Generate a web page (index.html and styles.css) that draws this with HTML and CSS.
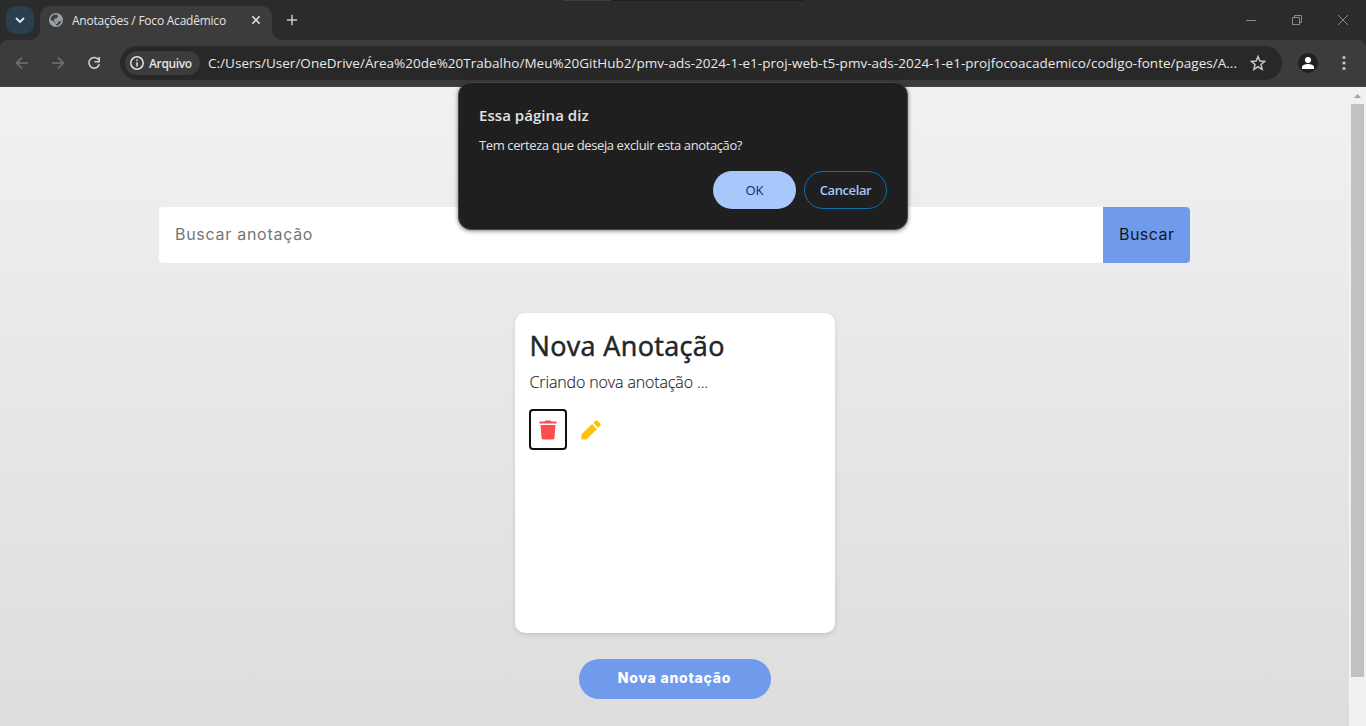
FILE: index.html
```html
<!DOCTYPE html>
<html lang="pt-BR">
<head>
<meta charset="utf-8">
<title>Anotações / Foco Acadêmico</title>
<link rel="stylesheet" href="styles.css">
</head>
<body>
<header class="browser">
  <div class="tabstrip">
    <div class="tabsearch"><svg width="28" height="28" viewBox="0 0 28 28"><path d="M10 12l4 4 4-4" fill="none" stroke="#e8eaed" stroke-width="1.8"/></svg></div>
    <div class="tab">
      <svg class="globe" width="14" height="14" viewBox="0 0 14 14"><circle cx="7" cy="7" r="7" fill="#9aa0a6"/><path d="M5.2 1.8L8 1.4 9.2 3.4 7.4 5.4H5.6L4.7 7.1H8.2L9.2 8.6 11.3 8.6 12.4 7C12.3 10 10 12.4 7 12.4V10.6L5.4 9.6V8.5L1.7 7C1.5 4.5 3 2.4 5.2 1.8Z" fill="#3c3c3c"/><path d="M8.4 1.5L10.9 3.1 12.2 6.5 10.3 6.8 8.9 5.6 9.1 3.2ZM5.2 6.9H8L9.4 8.5 8.8 10.2 7 11.2Z" fill="#9aa0a6"/></svg>
      <span class="tabtitle">Anotações / Foco Acadêmico</span>
      <svg class="close" width="10" height="10" viewBox="0 0 10 10"><path d="M1.4 1.4l7.2 7.2M8.6 1.4L1.4 8.6" stroke="#e3e3e3" stroke-width="1.5"/></svg>
    </div>
    <svg class="plus" width="12" height="12" viewBox="0 0 12 12"><path d="M6 .8v10.4M.8 6h10.4" stroke="#c7c7c7" stroke-width="1.5"/></svg>
    <div class="windowctl">
      <svg width="12" height="12" viewBox="0 0 12 12"><path d="M1 6.5h10" stroke="#8c8c8c"/></svg>
      <svg width="12" height="12" viewBox="0 0 12 12"><path d="M1.5 3.5h7v7h-7zM3.5 3.5v-2h7v7h-2" fill="none" stroke="#8c8c8c"/></svg>
      <svg width="12" height="12" viewBox="0 0 12 12"><path d="M1 1l10 10M11 1L1 11" stroke="#8c8c8c"/></svg>
    </div>
    <div class="edge"><i></i></div>
  </div>
  <div class="toolbar">
    <svg class="nav" width="14" height="14" viewBox="0 0 14 14"><path d="M13 7H2M7 1.5L1.5 7 7 12.5" fill="none" stroke="#747474" stroke-width="1.5"/></svg>
    <svg class="nav" width="14" height="14" viewBox="0 0 14 14"><path d="M1 7h11M7 1.5L12.500 7 7 12.5" fill="none" stroke="#747474" stroke-width="1.5"/></svg>
    <svg class="nav" width="14" height="14" viewBox="0 0 14 14"><path d="M11.500 3.700A5.300 5.300 0 1 0 12.300 8.300M12.200 1v4.800H7.500" fill="none" stroke="#d0d0d0" stroke-width="1.6"/></svg>
    <div class="omnibox">
      <div class="chip">
        <svg width="14" height="14" viewBox="0 0 14 14"><circle cx="7" cy="7" r="6.200" fill="none" stroke="#e3e3e3" stroke-width="1.500"/><path d="M7 6.200v4.200M7 3.500v1.600" stroke="#e3e3e3" stroke-width="1.500"/></svg>
        <span>Arquivo</span>
      </div>
      <span class="url">C:/Users/User/OneDrive/Área%20de%20Trabalho/Meu%20GitHub2/pmv-ads-2024-1-e1-proj-web-t5-pmv-ads-2024-1-e1-projfocoacademico/codigo-fonte/pages/A...</span>
      <svg class="star" width="16" height="16" viewBox="0 0 16 16"><path d="M8 1.500l1.850 4.500 4.850.4-3.700 3.150 1.150 4.750L8 11.750 3.850 14.300 5 9.550 1.300 6.400l4.850-.4z" fill="none" stroke="#c7c7c7" stroke-width="1.500"/></svg>
    </div>
    <svg class="profile" width="20" height="20" viewBox="0 0 20 20"><circle cx="10" cy="10" r="10" fill="#202222"/><circle cx="10" cy="7" r="3" fill="#fff"/><path d="M4 16v-2c0-2 3.500-3 6-3s6 1 6 3v2z" fill="#fff"/></svg>
    <svg class="dots" width="4" height="16" viewBox="0 0 4 16"><g fill="#c7c7c7"><circle cx="2" cy="2.500" r="1.600"/><circle cx="2" cy="8" r="1.600"/><circle cx="2" cy="13.500" r="1.600"/></g></svg>
  </div>
</header>
<div class="viewport">
  <main class="page">
    <form class="search"><div class="field"><span>Buscar anotação</span></div><div class="submit"><span>Buscar</span></div></form>
    <article class="card">
      <h2><span>Nova Anotação</span></h2>
      <p><span>Criando nova anotação ...</span></p>
      <div class="actions">
        <div class="trash"><svg width="18" height="20" viewBox="0 0 18 20"><path d="M.5 1.500h5l1-1h5l1 1h5v2H.5zM1.500 5h15l-1 13q-.1 1.500-1.500 1.500H4q-1.400 0-1.500-1.500z" fill="#ff4d4d"/></svg></div>
        <svg class="pencil" width="20" height="20" viewBox="0 0 20 20"><path d="M.4 14.600L11 4l5 5L5.400 19.600H1.300q-.9 0-.9-.9zM12.200 2.800L14.400.8q1-1 2.200 0l2.600 2.600q1 1 0 2.200L17.200 7.800z" fill="#ffc107"/></svg>
      </div>
    </article>
    <div class="new"><span>Nova anotação</span></div>
  </main>
  <div class="scroll"><svg width="7" height="4" viewBox="0 0 7 4"><path d="M0 4L3.500 0 7 4z" fill="#a3a3a3"/></svg><div class="thumb"></div></div>
</div>
<div class="dialog" role="dialog">
  <div class="dtitle"><span>Essa página diz</span></div>
  <div class="dmsg"><span>Tem certeza que deseja excluir esta anotação?</span></div>
  <div class="dbtns"><div class="ok">OK</div><div class="cancel">Cancelar</div></div>
</div>
</body>
</html>
```
FILE: styles.css
```css
* { box-sizing: border-box; }
body { margin: 0; width: 1366px; height: 726px; overflow: hidden; display: flex; flex-direction: column; font-family: "Open Sans", "Noto Sans", sans-serif; }
svg { display: block; flex: none; }
span { white-space: nowrap; }
.browser { height: 87px; flex: none; background: #2b2b2b; color: #e3e3e3; }
.tabstrip { height: 40px; display: flex; align-items: center; padding-left: 6px; position: relative; }
.tabsearch { width: 28px; height: 28px; border-radius: 10px; background: #28404e; }
.tab { align-self: flex-end; width: 232px; height: 34px; margin-left: 6px; border-radius: 10px 10px 0 0; background: #3c3c3c; display: flex; align-items: center; padding: 0 11px 6px 9px; position: relative; }
.tab::before, .tab::after { content: ""; position: absolute; bottom: 0; width: 10px; height: 10px; }
.tab::before { left: -10px; background: radial-gradient(circle at 0 0, transparent 9.5px, #3c3c3c 10px); }
.tab::after { right: -10px; background: radial-gradient(circle at 100% 0, transparent 9.5px, #3c3c3c 10px); }
.tabtitle { margin-left: 9px; font-size: 12px; letter-spacing: -0.23px; flex: 1; }
.plus { margin-left: 14px; }
.windowctl { margin-left: auto; display: flex; gap: 34px; padding-right: 17px; }
.edge { position: absolute; left: 563px; top: 0; width: 241px; height: 1px; background: #1f1f1f; }
.edge i { display: block; width: 48px; height: 1px; background: #3e3e3e; }
.toolbar { height: 47px; background: #3c3c3c; border-radius: 8px 8px 0 0; border-bottom: 1px solid #474747; display: flex; align-items: center; padding-left: 15px; }
.nav { margin-right: 22px; }
.omnibox { margin-left: -3px; width: 1162px; height: 34px; border-radius: 17px; background: #282828; display: flex; align-items: center; padding: 0 16px 0 5px; }
.chip { width: 75px; height: 24px; border-radius: 12px; background: #3c3c3c; display: flex; align-items: center; padding-left: 5px; font-size: 12px; font-weight: 600; letter-spacing: -0.35px; }
.chip span { margin-left: 5px; }
.url { margin-left: 8px; font-size: 13.5px; letter-spacing: 0.02px; width: 1034px; color: #e8e8e8; }
.star { margin-left: auto; }
.profile { margin-left: 16px; }
.dots { margin-left: 24px; }
.viewport { flex: 1; display: flex; }
.page { width: 1349px; background: linear-gradient(#f1f1f1, #dddddd); display: flex; flex-direction: column; align-items: center; padding-top: 120px; font-family: Inter, sans-serif; }
.search { width: 1031px; height: 56px; margin: 0; display: flex; border-radius: 4px; overflow: hidden; background: #fff; font-size: 16px; line-height: 55px; }
.field { flex: 1; padding-left: 16px; color: #757575; letter-spacing: 0.72px; }
.submit { width: 87px; padding-left: 16px; background: #709bed; color: #101722; letter-spacing: 0.45px; }
.card { width: 320px; height: 320px; margin-top: 50px; padding: 15px; border-radius: 10px; background: #fff; box-shadow: 0 2px 5px rgba(0,0,0,.12); font-family: "Open Sans", "Noto Sans", sans-serif; color: #212529; }
.card h2 { margin: 0; height: 34px; line-height: 36px; font-size: 27px; font-weight: 500; letter-spacing: 0.35px; -webkit-text-stroke: 0.5px #212529; }
.card p { margin: 9px 0 0; height: 24px; line-height: 23px; font-size: 16px; font-weight: 300; letter-spacing: -0.13px; -webkit-text-stroke: 0.15px #212529; }
.actions { display: flex; align-items: center; margin: 14px 0 0 -1px; }
.trash { width: 38px; height: 41px; border: 2px solid #101010; border-radius: 4px; display: flex; align-items: center; justify-content: center; }
.pencil { margin-left: 14px; }
.new { width: 192px; height: 40px; margin-top: 26px; border-radius: 20px; background: #709bed; color: #fff; font-size: 14px; font-weight: 800; line-height: 38px; text-align: center; letter-spacing: 0.75px; }
.scroll { width: 17px; background: #f1f1f1; display: flex; flex-direction: column; align-items: center; padding-top: 7px; }
.thumb { width: 13px; height: 573px; margin-top: 6px; background: #c1c1c1; }
.dialog { position: absolute; left: 458px; top: 82px; width: 450px; height: 148px; padding: 21px 20px; border: 1px solid #454746; border-radius: 13px; background: #1f1f1f; box-shadow: 0 1px 4px rgba(0,0,0,.5); color: #e3e3e3; }
.dtitle { height: 22px; line-height: 22px; font-size: 15px; font-weight: 600; letter-spacing: 0.05px; }
.dmsg { height: 20px; margin-top: 9px; line-height: 20px; font-size: 13px; letter-spacing: -0.39px; }
.dbtns { display: flex; justify-content: flex-end; gap: 8px; margin-top: 16px; font-size: 13px; line-height: 38px; text-align: center; }
.ok { width: 83px; height: 38px; border-radius: 19px; background: #a8c7fa; color: #062e6f; }
.cancel { width: 83px; height: 38px; border: 1px solid #0b6fa8; border-radius: 19px; line-height: 36px; color: #a8c7fa; font-weight: 600; letter-spacing: -.4px; }
```
